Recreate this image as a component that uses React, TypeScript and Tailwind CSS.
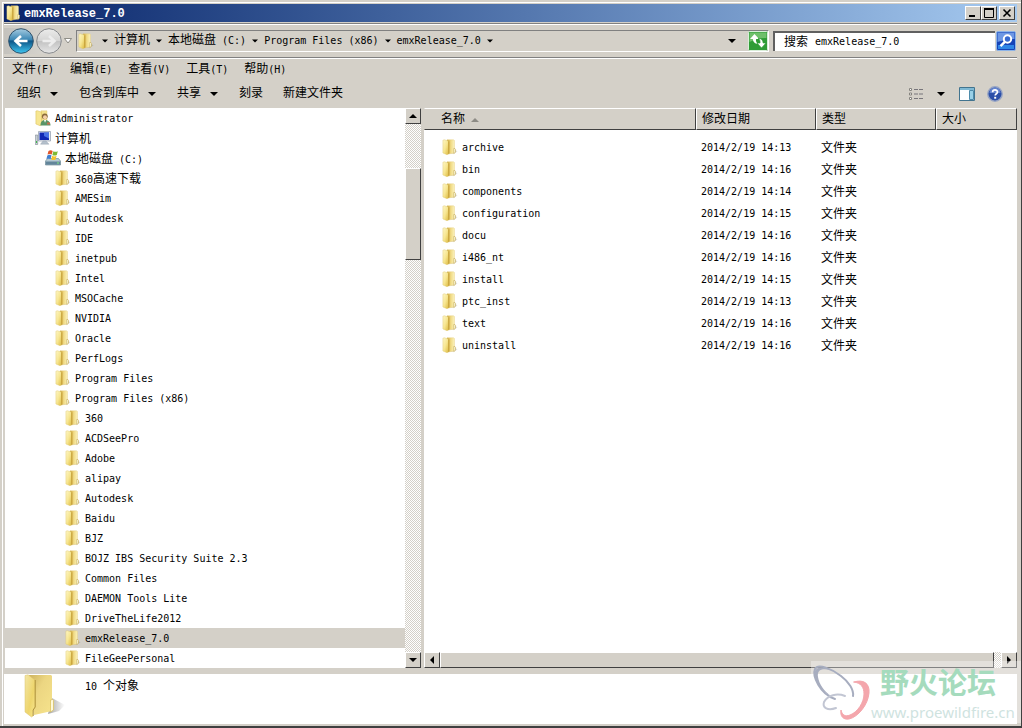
import type { ReactNode } from 'react';

type TreeItem = { name: string; level: number; icon?: 'user' | 'computer' | 'disk' };

const tree: TreeItem[] = [
  { name: 'Administrator', level: 0, icon: 'user' },
  { name: '计算机', level: 0, icon: 'computer' },
  { name: '本地磁盘 (C:)', level: 1, icon: 'disk' },
  { name: '360高速下载', level: 2 },
  { name: 'AMESim', level: 2 },
  { name: 'Autodesk', level: 2 },
  { name: 'IDE', level: 2 },
  { name: 'inetpub', level: 2 },
  { name: 'Intel', level: 2 },
  { name: 'MSOCache', level: 2 },
  { name: 'NVIDIA', level: 2 },
  { name: 'Oracle', level: 2 },
  { name: 'PerfLogs', level: 2 },
  { name: 'Program Files', level: 2 },
  { name: 'Program Files (x86)', level: 2 },
  { name: '360', level: 3 },
  { name: 'ACDSeePro', level: 3 },
  { name: 'Adobe', level: 3 },
  { name: 'alipay', level: 3 },
  { name: 'Autodesk', level: 3 },
  { name: 'Baidu', level: 3 },
  { name: 'BJZ', level: 3 },
  { name: 'BOJZ IBS Security Suite 2.3', level: 3 },
  { name: 'Common Files', level: 3 },
  { name: 'DAEMON Tools Lite', level: 3 },
  { name: 'DriveTheLife2012', level: 3 },
  { name: 'emxRelease_7.0', level: 3 },
  { name: 'FileGeePersonal', level: 3 },
];

const indents = ['pl-[30px]', 'pl-[40px]', 'pl-[50px]', 'pl-[60px]'];

const files = [
  { name: 'archive', date: '2014/2/19 14:13' },
  { name: 'bin', date: '2014/2/19 14:16' },
  { name: 'components', date: '2014/2/19 14:14' },
  { name: 'configuration', date: '2014/2/19 14:15' },
  { name: 'docu', date: '2014/2/19 14:16' },
  { name: 'i486_nt', date: '2014/2/19 14:16' },
  { name: 'install', date: '2014/2/19 14:15' },
  { name: 'ptc_inst', date: '2014/2/19 14:13' },
  { name: 'text', date: '2014/2/19 14:16' },
  { name: 'uninstall', date: '2014/2/19 14:16' },
];

const menus = ['文件(F)', '编辑(E)', '查看(V)', '工具(T)', '帮助(H)'];
const crumbs = ['计算机', '本地磁盘 (C:)', 'Program Files (x86)', 'emxRelease_7.0'];

const raised =
  'border border-t-white border-l-white border-r-[#404040] border-b-[#404040] bg-[#d4d0c8]';
const track =
  'bg-[repeating-conic-gradient(#d4d0c8_0_25%,#ffffff_0_50%)] bg-[length:2px_2px]';

// Chinese runs are set a little larger than the Latin ones
function Mixed({ text }: { text: string }) {
  const parts = text.split(/([\u4e00-\u9fff]+)/).filter(Boolean);
  return (
    <span className="whitespace-pre">
      {parts.map((part, i) =>
        /[\u4e00-\u9fff]/.test(part) ? (
          <span key={i} className="text-[12px]">{part}</span>
        ) : (
          part
        )
      )}
    </span>
  );
}

function Arrow({ dir = 'down', small = false }: { dir?: 'down' | 'up' | 'left' | 'right'; small?: boolean }) {
  const paths = {
    down: 'M0 2h8L4 6z',
    up: 'M0 6h8L4 2z',
    left: 'M6 0v8L2 4z',
    right: 'M2 0v8l4-4z',
  };
  return (
    <svg viewBox="0 0 8 8" className={small ? 'size-[6px] shrink-0' : 'size-[8px] shrink-0'} aria-hidden="true">
      <path d={paths[dir]} fill="#000" />
    </svg>
  );
}

function Folder({ className = 'size-[16px]' }: { className?: string }) {
  return (
    <svg viewBox="0 0 16 16" className={`${className} shrink-0`} aria-hidden="true">
      <defs>
        <linearGradient id="folderFront" x1="0" y1="0" x2="1" y2="1">
          <stop offset="0" stopColor="#fdf6c8" />
          <stop offset=".5" stopColor="#f7e691" />
          <stop offset="1" stopColor="#dcb941" />
        </linearGradient>
        <linearGradient id="folderBack" x1="0" y1="0" x2="1" y2="0">
          <stop offset="0" stopColor="#c9a032" />
          <stop offset=".5" stopColor="#f0da84" />
          <stop offset="1" stopColor="#fbf2bd" />
        </linearGradient>
      </defs>
      <path d="M13 10.5 15.5 12.5 11 15 8 14.5z" fill="#000" opacity=".12" />
      <path d="M5 .8h6.500l1 .7V14L6 15z" fill="url(#folderBack)" stroke="#e3cb78" strokeWidth=".4" />
      <path d="M11.800 9.500h1l.7.8v3l-1.700 1.200z" fill="#fdf9df" stroke="#b99b3a" strokeWidth=".5" />
      <path d="M.9 1.200 2.300.7 6.500 2.200V15L5 15.700.9 14z" fill="url(#folderFront)" stroke="#dcc468" strokeWidth=".4" />
      <path d="M6.800 2.300V14.800" stroke="#b88e22" strokeWidth=".7" />
    </svg>
  );
}

// the tall half-open folder in the details pane
function LargeFolder() {
  return (
    <svg viewBox="0 0 42 46" className="h-[46px] w-[42px] shrink-0" aria-hidden="true">
      <defs>
        <linearGradient id="bigFront" x1="0" y1="0" x2="1" y2="1">
          <stop offset="0" stopColor="#f3e6a6" />
          <stop offset=".6" stopColor="#eed56c" />
          <stop offset="1" stopColor="#f7e690" />
        </linearGradient>
        <linearGradient id="bigBack" x1="0" y1="0" x2="1" y2="1">
          <stop offset="0" stopColor="#cdb35f" />
          <stop offset=".4" stopColor="#ecd682" />
          <stop offset="1" stopColor="#f6e38c" />
        </linearGradient>
        <linearGradient id="bigShadow" x1="0" y1="0" x2="1" y2="0">
          <stop offset="0" stopColor="#000" stopOpacity=".35" />
          <stop offset="1" stopColor="#000" stopOpacity="0" />
        </linearGradient>
      </defs>
      <path d="M28 24 41 31 35 37 24 40z" fill="url(#bigShadow)" />
      <path d="M5 1h22l1 1v35L10 41z" fill="url(#bigBack)" />
      <path d="M26.500 26l2-.5 1 1v9.500l-3 2z" fill="#fff9d9" stroke="#d9bd58" strokeWidth=".7" />
      <path d="M1 1.500 4 .8 11 6V33l-2 3v6l-1.500 1L1 38z" fill="url(#bigFront)" stroke="#dac06a" strokeWidth=".5" />
      <path d="M11.200 6v27l-2 3v6" fill="none" stroke="#a98d35" strokeWidth=".9" />
    </svg>
  );
}

function TreeIcon({ icon }: { icon?: TreeItem['icon'] }) {
  if (icon === 'user') {
    return (
      <svg viewBox="0 0 16 16" className="size-[16px] shrink-0" aria-hidden="true">
        <path d="M6 .8h6v13H6z" fill="#f3e08e" stroke="#dcc468" strokeWidth=".4" />
        <path d="M.9 1 2.300.7 6.500 2.200V15L5 15.700.9 14z" fill="#f7e691" stroke="#d8bd56" strokeWidth=".5" />
        <circle cx="9.800" cy="6.300" r="2.900" fill="#8a6a3c" />
        <circle cx="10" cy="7.300" r="2" fill="#f4cfa6" />
        <path d="M5.500 15.500c0-4 2-5.500 4.500-5.500s5.500 1.500 5.500 5.500z" fill="#5a9468" />
        <path d="m9 10 1 2.800 1.200-2.800z" fill="#fff" />
        <path d="M12 12.500h3v2h-3z" fill="#c96c4e" />
      </svg>
    );
  }
  if (icon === 'computer') {
    return (
      <svg viewBox="0 0 16 16" className="size-[16px] shrink-0" aria-hidden="true">
        <path d="M.3 5h2.400v9.500H.3z" fill="#c6ced6" stroke="#7c8791" strokeWidth=".6" />
        <path d="M1 11h1v2H1z" fill="#42b94b" />
        <path d="M3.500 1.500h12v9.500h-12z" fill="#e6ebf2" stroke="#8d9aaa" strokeWidth=".7" />
        <path d="M4.500 2.500h9.500v7.500H4.500z" fill="#1028b4" />
        <path d="M9 2.500h5v6L9 6z" fill="#4872e6" />
        <path d="M8 11h3l3 3.200H5.500z" fill="#b4c0cc" stroke="#8d9aaa" strokeWidth=".4" />
      </svg>
    );
  }
  if (icon === 'disk') {
    return (
      <svg viewBox="0 0 16 16" className="size-[16px] shrink-0" aria-hidden="true">
        <path d="m2.500 8.500-2 2.500v4h15v-4l-2-2.500z" fill="#b4c8d1" stroke="#5f7d8c" strokeWidth=".6" />
        <path d="M.8 11.500h14.400v3.200H.8z" fill="#62859a" />
        <path d="M12 12.500h2v1h-2z" fill="#7ff07e" />
        <path d="M3.500.9C5 0 6.500.2 7.700.9L6.700 4.600C5.600 3.900 4 3.800 2.500 4.600z" fill="#e0562b" />
        <path d="M8.400 1.300c1.400.8 3 .7 4.400-.1l-1 3.700c-1.400.8-3 .8-4.400 0z" fill="#7cb934" />
        <path d="M2.300 5.400c1.500-.8 3-.7 4.200 0L5.600 9c-1.200-.8-2.800-.8-4.200-.1z" fill="#3f7fd0" />
        <path d="M7.200 5.800c1.400.8 3 .8 4.400 0l-1 3.600c-1.400.8-3 .8-4.300 0z" fill="#f4c430" />
      </svg>
    );
  }
  return <Folder />;
}

function WindowButton({ label, children }: { label: string; children: ReactNode }) {
  return (
    <button type="button" aria-label={label} className={`flex h-[14px] w-[16px] items-center justify-center ${raised}`}>
      <svg viewBox="0 0 12 12" className="size-[12px]" fill="none" stroke="#000">{children}</svg>
    </button>
  );
}

function NavButton({ label, blue = false }: { label: string; blue?: boolean }) {
  return (
    <button type="button" aria-label={label} className="size-[26px] shrink-0">
      <svg viewBox="0 0 26 26" className="size-[26px]">
        <defs>
          <linearGradient id="navBlue" x1="0" y1="0" x2="0" y2="1">
            <stop offset="0" stopColor="#a5cbe0" />
            <stop offset=".45" stopColor="#3a86b4" />
            <stop offset=".5" stopColor="#0d5587" />
            <stop offset="1" stopColor="#3fc7f2" />
          </linearGradient>
          <linearGradient id="navGrey" x1="0" y1="0" x2="0" y2="1">
            <stop offset="0" stopColor="#ececeb" />
            <stop offset=".48" stopColor="#d5d5d4" />
            <stop offset=".52" stopColor="#c3c3c3" />
            <stop offset="1" stopColor="#e6e6e6" />
          </linearGradient>
        </defs>
        <circle cx="13" cy="13" r="12.300" fill={blue ? 'url(#navBlue)' : 'url(#navGrey)'} stroke={blue ? '#31526b' : '#85878a'} />
        <path
          d={blue ? 'M19.500 13H8M13 8l-5.500 5 5.500 5' : 'M6.500 13H18M13 8l5.500 5-5.500 5'}
          fill="none"
          stroke={blue ? '#fff' : '#ededed'}
          strokeWidth="2.600"
        />
      </svg>
    </button>
  );
}

function TitleBar() {
  return (
    <header className="flex h-[18px] items-center bg-linear-to-r from-[#0a246a] to-[#a6caf0] px-[2px]">
      <Folder />
      <h1 className="ml-[2px] flex-1 pt-[2px] font-['Liberation_Mono','Noto_Sans_CJK_SC',monospace] text-[12px] font-bold text-white">
        emxRelease_7.0
      </h1>
      <div className="flex">
        <WindowButton label="最小化">
          <path d="M2 9h6" strokeWidth="2" />
        </WindowButton>
        <WindowButton label="最大化">
          <path d="M1.500 2.500h9v8h-9z" />
          <path d="M1 2h10" strokeWidth="2" />
        </WindowButton>
        <div className="ml-[2px] flex">
          <WindowButton label="关闭">
            <path d="m2.500 2.500 7 7m0-7-7 7" strokeWidth="1.600" />
          </WindowButton>
        </div>
      </div>
    </header>
  );
}

function AddressBar() {
  return (
    <div className="mt-px flex h-[35px] items-center border-t border-b border-t-[#808080] border-b-[#808080] pr-px shadow-[inset_0_1px_#fff,0_1px_#fff]">
      <div className="flex items-center gap-[2px] rounded-r-full bg-linear-to-r from-[#c4c2bd] to-[#dedbd5] pl-[4px]">
        <NavButton label="后退" blue />
        <NavButton label="前进" />
      </div>
      <button type="button" aria-label="最近浏览的页面" className="flex w-[12px] justify-center">
        <svg viewBox="0 0 8 6" className="h-[6px] w-[8px]">
          <path d="M.5.500h7L4 5z" fill="#fff" stroke="#77766f" strokeWidth=".8" />
        </svg>
      </button>
      <nav
        aria-label="地址"
        className="ml-[2px] flex h-[22px] min-w-0 flex-1 items-center border border-t-[#808080] border-r-white border-b-white border-l-[#808080] pl-px"
      >
        <Folder />
        <span className="ml-[8px] flex items-center">
          <Arrow small />
        </span>
        {crumbs.map((crumb) => (
          <div key={crumb} className="flex items-center">
            <a href="#" className="mx-[6px]">
              <Mixed text={crumb} />
            </a>
            <Arrow small />
          </div>
        ))}
        <button type="button" aria-label="以前的位置" className="mr-[12px] ml-auto">
          <Arrow />
        </button>
        <button type="button" aria-label="刷新" className="size-[20px]">
          <svg viewBox="0 0 20 20" className="size-[20px]">
            <rect x=".5" y=".5" width="19" height="19" rx="1" fill="#2f9c36" stroke="#d9eed9" />
            <path d="M1.500 1.500h17V7c-6 0-10 1-17 4z" fill="#6fbf6b" />
            <path d="M6.500 3 2 8h2.800c.2 3 2 4.600 5 4.800C8.200 11.500 7.800 10 8 8h3z" fill="#fff" />
            <path d="M13.500 17 18 12h-2.800c-.2-3-2-4.600-5-4.800 1.600 1.300 2 2.800 1.800 4.800H9z" fill="#fff" stroke="#2f9c36" strokeWidth=".7" />
          </svg>
        </button>
      </nav>
      <div className="ml-[4px] flex h-[20px] w-[222px] items-center border-t-2 border-l-2 border-t-[#606060] border-l-[#606060] bg-white pl-[9px]">
        <label htmlFor="search" className="mr-[7px] shrink-0 text-[12px] whitespace-nowrap">搜索</label>
        <input
          id="search"
          type="text"
          defaultValue="emxRelease_7.0"
          className="min-w-0 flex-1 bg-transparent outline-none"
        />
      </div>
      <button type="button" aria-label="搜索" className="ml-px size-[20px]">
        <svg viewBox="0 0 20 20" className="size-[20px]">
          <rect x=".5" y=".5" width="19" height="19" rx="1.500" fill="#1644b8" stroke="#8db4e8" />
          <path d="M1.500 1.500h17V8c-6 0-10 1-17 3z" fill="#6e98e4" />
          <path d="M2 14h16v4H2z" fill="#2f86e6" />
          <circle cx="11.500" cy="8" r="3.700" fill="#3769cf" stroke="#fff" strokeWidth="2" />
          <path d="m8.800 10.800-4.300 4.300" stroke="#fff" strokeWidth="2.500" />
        </svg>
      </button>
    </div>
  );
}

function Toolbar() {
  return (
    <div className="flex h-[29px] items-center justify-between pr-[14px] pl-[13px]">
      <div className="flex gap-[21px]">
        {['组织', '包含到库中', '共享'].map((name) => (
          <button key={name} type="button" className="flex items-center gap-[9px]">
            <Mixed text={name} />
            <Arrow />
          </button>
        ))}
        <button type="button">
          <Mixed text="刻录" />
        </button>
        <button type="button" className="-ml-px">
          <Mixed text="新建文件夹" />
        </button>
      </div>
      <div className="flex items-center">
        <button type="button" aria-label="更改您的视图" className="flex items-center gap-[13px]">
          <svg viewBox="0 0 16 14" className="h-[14px] w-[16px]" fill="none">
            <path d="M1.500 1.500h2v2h-2zm0 4.500h2v2h-2zm0 4.500h2v2h-2z" fill="#fff" stroke="#85837e" />
            <path d="M6 2.500h4m1 0h4M6 7h4m1 0h4m-9 4.500h4m1 0h4" stroke="#77757a" />
          </svg>
          <Arrow />
        </button>
        <button type="button" aria-label="显示预览窗格" className="ml-[14px]">
          <svg viewBox="0 0 16 14" className="h-[14px] w-[16px]">
            <path d="M.5.500h15v13H.500z" fill="#fff" stroke="#42748f" />
            <path d="M1 1h14v2H1z" fill="#7fb9d4" />
            <path d="M10.500 3.500h4v9h-4z" fill="#9ad1e8" stroke="#4d8baa" />
          </svg>
        </button>
        <button type="button" aria-label="获取帮助" className="ml-[12px]">
          <svg viewBox="0 0 16 16" className="size-[16px]">
            <circle cx="8" cy="8" r="7.200" fill="#2b4fa8" stroke="#98a5c4" strokeWidth="1.400" />
            <path d="M2.500 7a5.500 5.500 0 0 1 11 0z" fill="#6484cf" />
            <path d="M5.600 6.200C5.600 3.200 10.500 3.300 10.500 6c0 1.800-2.300 1.700-2.300 3.600" fill="none" stroke="#fff" strokeWidth="1.700" />
            <path d="M7.200 10.800h2v1.900h-2z" fill="#fff" />
          </svg>
        </button>
      </div>
    </div>
  );
}

function ScrollButton({ dir, label }: { dir: 'up' | 'down' | 'left' | 'right'; label: string }) {
  return (
    <button type="button" aria-label={label} className={`flex size-[16px] shrink-0 items-center justify-center ${raised}`}>
      <Arrow dir={dir} />
    </button>
  );
}

function FolderTree() {
  return (
    <aside className="flex w-[416px] shrink-0 bg-white">
      <ul className="min-w-0 flex-1">
        {tree.map((item) => (
          <li key={`${item.level}-${item.name}`}>
            <a
              href="#"
              className={`flex h-[20px] items-center gap-[4px] ${indents[item.level]} ${
                item.name === 'emxRelease_7.0' ? 'bg-[#d4d0c8]' : ''
              }`}
            >
              <TreeIcon icon={item.icon} />
              <span className="pt-[2px]">
                <Mixed text={item.name} />
              </span>
            </a>
          </li>
        ))}
      </ul>
      <div className={`flex w-[16px] flex-col ${track}`}>
        <ScrollButton dir="up" label="向上滚动" />
        <div className={`mt-[44px] h-[92px] ${raised}`} />
        <div className="mt-auto">
          <ScrollButton dir="down" label="向下滚动" />
        </div>
      </div>
    </aside>
  );
}

function FileList() {
  const head = `h-[22px] pt-px pl-[5px] text-left font-normal ${raised}`;
  return (
    <section className="flex min-w-0 flex-1 flex-col bg-white">
      <table className="w-full table-fixed border-separate border-spacing-0">
        <colgroup>
          <col />
          <col className="w-[120px]" />
          <col className="w-[120px]" />
          <col className="w-[81px]" />
        </colgroup>
        <thead>
          <tr>
            <th className="h-[22px] border border-t-white border-r-[#404040] border-b-[#404040] border-l-[#d4d0c8] bg-[#d4d0c8] pt-px pl-[16px] text-left font-normal">
              <span className="flex items-center gap-[6px]">
                <Mixed text="名称" />
                <svg viewBox="0 0 8 4" className="h-[4px] w-[8px]" aria-hidden="true">
                  <path d="M0 4h8L4 0z" fill="#8d8b85" />
                </svg>
              </span>
            </th>
            <th className={head}><Mixed text="修改日期" /></th>
            <th className={head}><Mixed text="类型" /></th>
            <th className={head}><Mixed text="大小" /></th>
          </tr>
        </thead>
        <tbody>
          <tr aria-hidden="true">
            <td colSpan={4} className="h-[6px] p-0" />
          </tr>
          {files.map((file) => (
            <tr key={file.name}>
              <td className="h-[22px] py-0 pr-0 pl-[18px]">
                <a href="#" className="flex items-center gap-[4px]">
                  <Folder />
                  <span className="pt-[2px]">{file.name}</span>
                </a>
              </td>
              <td className="p-0 pt-[2px] pl-[5px]">{file.date}</td>
              <td className="p-0 pt-[2px] pl-[5px]"><Mixed text="文件夹" /></td>
              <td />
            </tr>
          ))}
        </tbody>
      </table>
      <div className={`mt-auto flex ${track}`}>
        <ScrollButton dir="left" label="向左滚动" />
        <div className={`mr-[7px] flex-1 ${raised}`} />
        <ScrollButton dir="right" label="向右滚动" />
      </div>
    </section>
  );
}

function Watermark() {
  return (
    <div className="pointer-events-none absolute right-0 bottom-[3px] flex h-[62px] w-[210px] bg-white/35">
      <svg viewBox="0 0 60 60" className="h-[60px] w-[60px] shrink-0" fill="none" strokeLinecap="round">
        <path d="M24 38C9 33 1 15 4 8 7 2 21 8 30 15c8 6 13 14 12 20" stroke="#a7adbf" strokeWidth="2" />
        <path d="M20 35C9 30 2 17 4 10c2-5 10-4 16-1C10 7 6 9 7 16c1 7 6 14 13 19z" fill="#a7adbf" />
        <path d="M34 35c-8-3-17-1-21 6-2 6 4 9 12 6" stroke="#c2c6d3" strokeWidth="2" />
        <path
          d="M43 21c9-3 16 1 15 11-1 12-11 24-20 26-6 1-9-3-8-9 1 5 4 7 9 5 8-3 14-13 14-21 0-7-3-11-10-12z"
          fill="#f4a6ac"
          stroke="#f4a6ac"
        />
      </svg>
      <div className="flex flex-col">
        <span className="ml-[9px] font-['Noto_Sans_CJK_SC',sans-serif] text-[29px] leading-[40px] font-bold whitespace-nowrap text-[#a5dbbd]">
          野火论坛
        </span>
        <span className="font-['Noto_Sans',sans-serif] text-[15px] leading-[22px] whitespace-nowrap text-[#cfe3df]">
          www.proewildfire.cn
        </span>
      </div>
    </div>
  );
}

export default function App() {
  return (
    <div className="relative flex min-h-screen flex-col border-r border-b-2 border-[#404040] bg-[#d4d0c8] pt-[4px] pr-[4px] pb-[2px] pl-[4px] font-['DejaVu_Sans_Mono','Noto_Sans_CJK_SC',monospace] text-[10px] leading-[16px] text-black shadow-[inset_2px_2px_#d4d0c8,inset_3px_3px_#fff]">
      <TitleBar />
      <AddressBar />
      <div className="mt-[2px] flex h-[19px] items-center gap-[16px] pl-[8px]">
        {menus.map((menu) => (
          <button key={menu} type="button">
            <Mixed text={menu} />
          </button>
        ))}
      </div>
      <Toolbar />
      <main className="flex gap-[3px] pl-px">
        <FolderTree />
        <FileList />
      </main>
      <footer className="mt-[6px] flex flex-1 bg-white pl-[20px]">
        <LargeFolder />
        <p className="mt-[4px] ml-[19px]">
          <Mixed text="10 个对象" />
        </p>
      </footer>
      <Watermark />
    </div>
  );
}
